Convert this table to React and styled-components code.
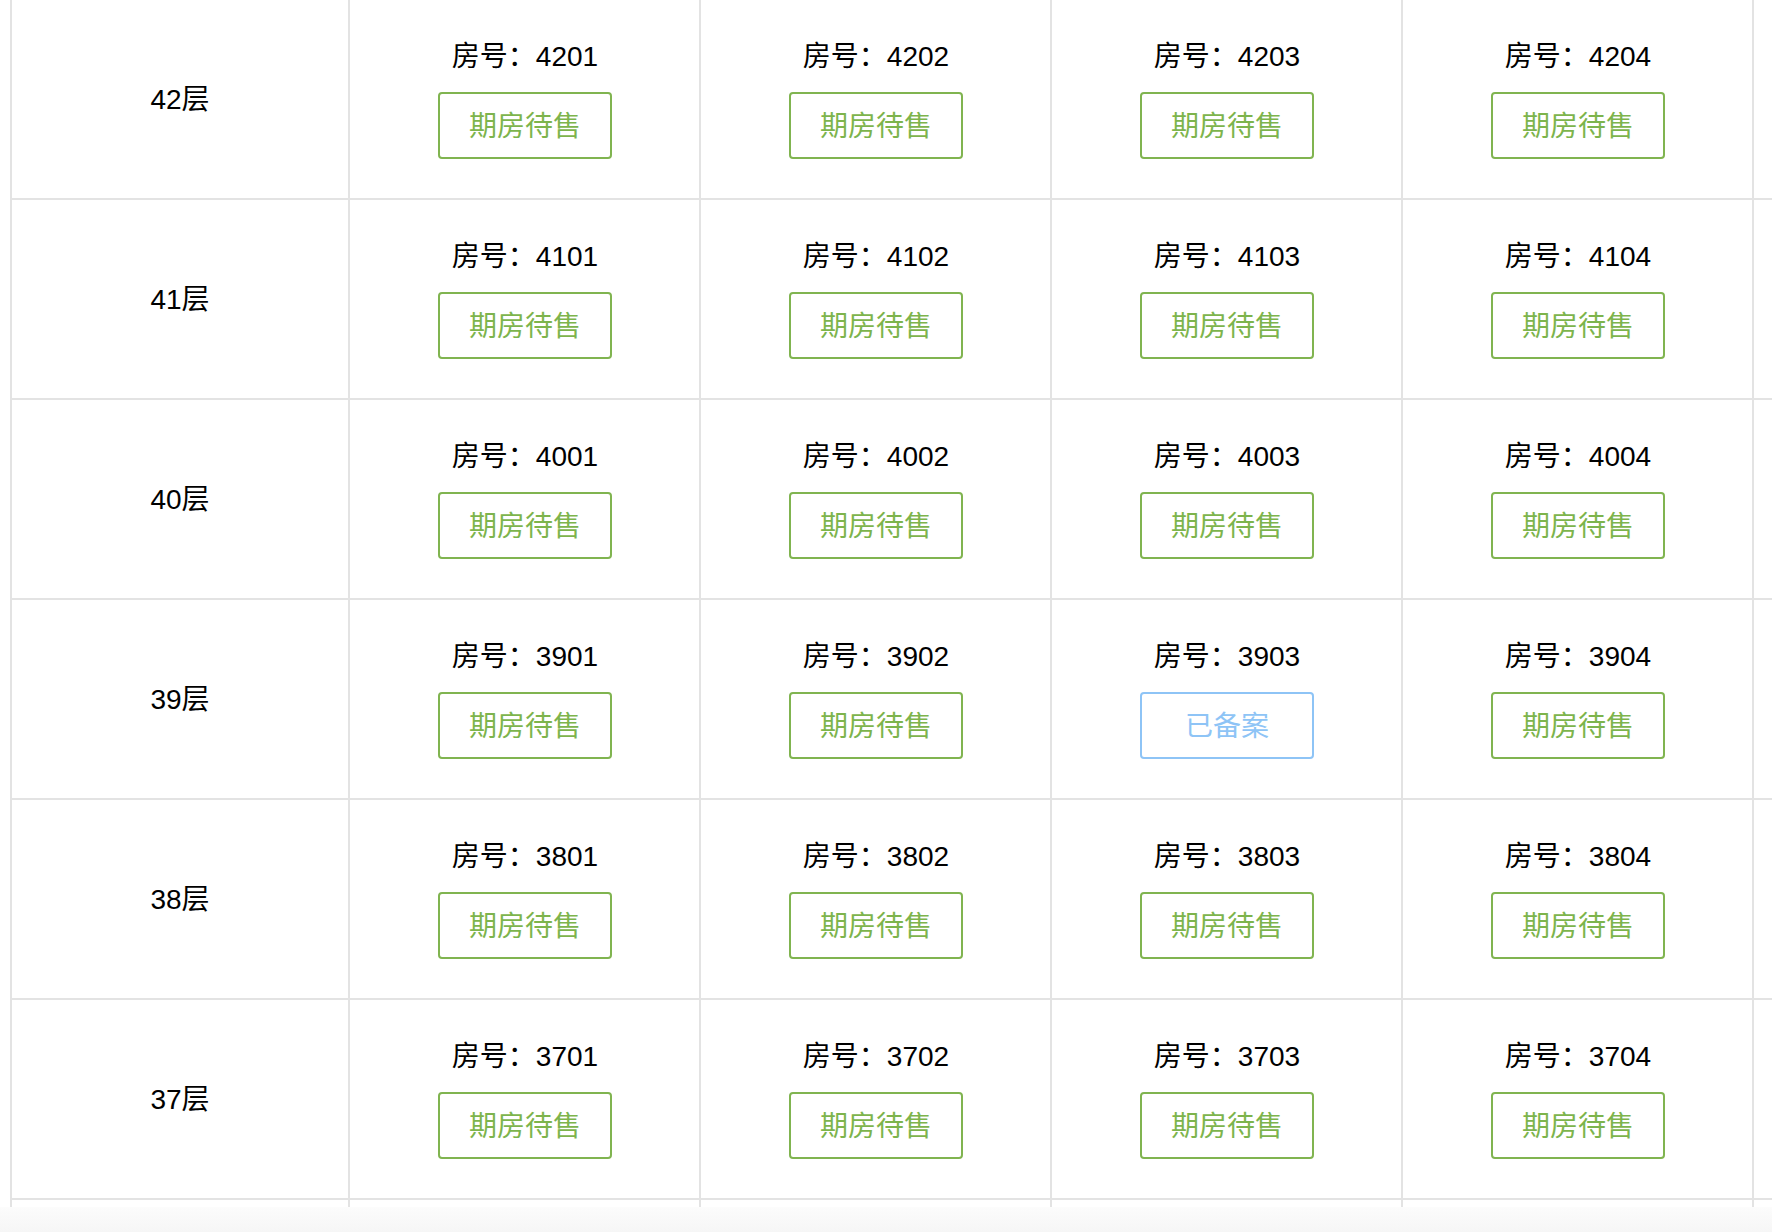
import styled, { createGlobalStyle } from 'styled-components';

const GlobalStyle = createGlobalStyle`
  html, body {
    margin: 0;
    padding: 0;
    overflow: hidden;
    background: #fff;
  }
  body {
    font-family: "Liberation Sans", "Noto Sans CJK SC", sans-serif;
    color: #000;
  }
`;

const floors = [42, 41, 40, 39, 38, 37];
const units = ['01', '02', '03', '04'];

// 已备案的房号
const filed = ['3903'];

function App() {
  return (
    <>
      <GlobalStyle />
      <Page>
        <Scroller>
          <Table>
            {floors.map((floor) => (
              <Row key={floor}>
                <FloorCell>{floor}层</FloorCell>
                {units.map((u) => {
                  const no = `${floor}${u}`;
                  const isFiled = filed.includes(no);
                  return (
                    <RoomCell key={no}>
                      <RoomNo>房号：{no}</RoomNo>
                      <StatusButton status={isFiled ? 'filed' : 'presale'}>
                        {isFiled ? '已备案' : '期房待售'}
                      </StatusButton>
                    </RoomCell>
                  );
                })}
                {/* 右侧还有一列，超出屏幕 */}
                <RoomCell />
              </Row>
            ))}
            {/* 下一层只露出一点边框 */}
            <Row>
              <FloorCell />
              {units.map((u) => (
                <RoomCell key={u} />
              ))}
              <RoomCell />
            </Row>
          </Table>
        </Scroller>
        <Footer />
      </Page>
    </>
  );
}

const Page = styled.div`
  display: flex;
  flex-direction: column;
  height: 100vh;
  width: 100vw;
  overflow: hidden;
`;

const Scroller = styled.div`
  flex: 1;
  overflow: hidden;
  padding-left: 10px;
`;

const Table = styled.div`
  display: flex;
  flex-direction: column;
  width: max-content;
  border-left: 2px solid #e3e3e3;
`;

const Row = styled.div`
  display: flex;
  height: 200px;
  box-sizing: border-box;
  border-bottom: 2px solid #e3e3e3;
`;

const FloorCell = styled.div`
  width: 338px;
  box-sizing: border-box;
  border-right: 2px solid #e3e3e3;
  display: flex;
  align-items: center;
  justify-content: center;
  font-size: 28px;
  padding-bottom: 4px;
`;

const RoomCell = styled.div`
  width: 351px;
  box-sizing: border-box;
  border-right: 2px solid #e3e3e3;
  display: flex;
  flex-direction: column;
  align-items: center;
  justify-content: center;
  padding-left: 1px;
`;

const RoomNo = styled.div`
  font-size: 28px;
  line-height: 32px;
  margin-top: 2px;
  margin-bottom: 19px;
`;

const StatusButton = styled.div`
  width: 174px;
  height: 67px;
  box-sizing: border-box;
  border: 2px solid ${(p) => (p.status === 'filed' ? '#8ec4f6' : '#80b450')};
  border-radius: 4px;
  color: ${(p) => (p.status === 'filed' ? '#8ec4f6' : '#7db44c')};
  font-size: 28px;
  display: flex;
  align-items: center;
  justify-content: center;
  padding-bottom: 4px;
`;

const Footer = styled.div`
  height: 25px;
  flex-shrink: 0;
  background: linear-gradient(#fcfcfc, #f6f6f6);
`;

export default App;
